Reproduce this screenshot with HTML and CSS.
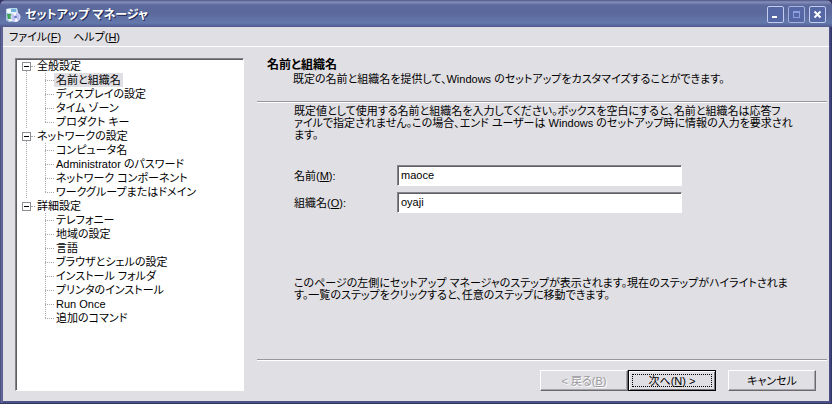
FILE: index.html
```html
<!DOCTYPE html>
<html lang="ja">
<head>
<meta charset="utf-8">
<title>セットアップ マネージャ</title>
<link rel="stylesheet" href="styles.css">
</head>
<body>
<div class="window">
  <header class="titlebar">
    <svg class="app-icon" viewBox="0 0 16 16" aria-hidden="true">
      <path d="M1 2 L5 1 L12 1 L13 4 V14 L4 15 L1 13 Z" fill="#b9d6ea"/>
      <path d="M2 2 H9 V6 H2 Z" fill="#f4fbff"/>
      <path d="M6 2 H11 V5 H6 Z" fill="#6fb4d8"/>
      <path d="M1 5 L4 7 V15 L1 13 Z" fill="#a9bfe2"/>
      <path d="M2 7 H7 V12 H3 Z" fill="#3fa355"/>
      <path d="M3 12 H7 V14 H4 Z" fill="#e9f3f4"/>
      <circle cx="10.500" cy="10" r="4.500" fill="#bfc2f0" stroke="#e4e7ff"/>
      <path d="M10.500 10 L8 6.500 L11 5.500 Z M10.500 10 L13 14 L10 14.500 Z" fill="#fff"/>
      <circle cx="10.500" cy="10" r="1.300" fill="#6f79c4"/>
    </svg>
    <h1 class="title">セットアップ マネージャ</h1>
    <div class="controls">
      <button class="control" type="button" aria-label="最小化"><svg viewBox="0 0 15 15"><path d="M4 9h5v2H4z" fill="#fff"/></svg></button>
      <button class="control" type="button" aria-label="最大化" disabled><svg viewBox="0 0 15 15"><path d="M4 4h7v7H4zM5 6v4h5V6z" fill="#8c9fe0" fill-rule="evenodd"/></svg></button>
      <button class="control" type="button" aria-label="閉じる"><svg viewBox="0 0 15 15"><path d="M4.500 4.500l6 6M10.500 4.500l-6 6" stroke="#fff" stroke-width="2"/></svg></button>
    </div>
  </header>
  <nav class="menubar">
    <button class="menu" type="button">ファイル(<u>F</u>)</button>
    <button class="menu" type="button">ヘルプ(<u>H</u>)</button>
  </nav>
  <main class="content">
    <nav class="tree">
      <ul>
        <li class="root"><span class="root-label"><span class="toggle"></span>全般設定</span>
          <ul class="branch">
            <li><a href="#" class="current">名前と組織名</a></li>
            <li><a href="#">ディスプレイの設定</a></li>
            <li><a href="#">タイム ゾーン</a></li>
            <li><a href="#">プロダクト キー</a></li>
          </ul>
        </li>
        <li class="root"><span class="root-label"><span class="toggle"></span>ネットワークの設定</span>
          <ul class="branch">
            <li><a href="#">コンピュータ名</a></li>
            <li><a href="#">Administrator のパスワード</a></li>
            <li><a href="#">ネットワーク コンポーネント</a></li>
            <li><a href="#">ワークグループまたはドメイン</a></li>
          </ul>
        </li>
        <li class="root"><span class="root-label"><span class="toggle"></span>詳細設定</span>
          <ul class="branch">
            <li><a href="#">テレフォニー</a></li>
            <li><a href="#">地域の設定</a></li>
            <li><a href="#">言語</a></li>
            <li><a href="#">ブラウザとシェルの設定</a></li>
            <li><a href="#">インストール フォルダ</a></li>
            <li><a href="#">プリンタのインストール</a></li>
            <li><a href="#">Run Once</a></li>
            <li><a href="#">追加のコマンド</a></li>
          </ul>
        </li>
      </ul>
    </nav>
    <form class="page">
      <div class="heading">
        <h2>名前と組織名</h2>
        <p>既定の名前と組織名を提供して、Windows のセットアップをカスタマイズすることができます。</p>
      </div>
      <div class="body">
        <p>既定値として使用する名前と組織名を入力してください。ボックスを空白にすると、名前と組織名は応答フ<br>ァイルで指定されません。この場合、エンド ユーザーは Windows のセットアップ時に情報の入力を要求され<br>ます。</p>
        <div class="fields">
          <label for="name">名前(<u>M</u>):</label>
          <input id="name" type="text" value="maoce">
          <label for="org">組織名(<u>O</u>):</label>
          <input id="org" type="text" value="oyaji">
        </div>
        <p>このページの左側にセットアップ マネージャのステップが表示されます。現在のステップがハイライトされま<br>す。一覧のステップをクリックすると、任意のステップに移動できます。</p>
      </div>
      <footer class="actions">
        <div class="pair">
          <button class="push" type="button" disabled>&lt; 戻る(<u>B</u>)</button>
          <button class="push default" type="button">次へ(<u>N</u>) &gt;</button>
        </div>
        <button class="push" type="button">キャンセル</button>
      </footer>
    </form>
  </main>
</div>
</body>
</html>
```

FILE: styles.css
```css
* { box-sizing: border-box; margin: 0; padding: 0; }

body {
  background: #33345f;
  color: #000;
  font: 11px/12px "Liberation Sans", "Noto Sans CJK JP", sans-serif;
  font-feature-settings: "palt";
}

button, input { font: inherit; font-feature-settings: inherit; color: inherit; }
ul { list-style: none; }
u { text-underline-offset: 1px; }

.window {
  display: flex;
  flex-direction: column;
  min-height: 100vh;
  padding: 0 3px 2px;
  background: linear-gradient(90deg, #45477c, #696f9f 2px, #4c5286 3px, #4c5286 calc(100% - 3px), #454a82 calc(100% - 2px), #2f3060);
  border-bottom: 1px solid #33345f;
  border-radius: 6px 6px 0 0;
  overflow: hidden;
}

.titlebar {
  display: flex;
  align-items: center;
  height: 27px;
  margin: 0 -3px;
  padding: 2px 6px 0 5px;
  gap: 4px;
  background: linear-gradient(#4b5286, #8790ba 2px, #5d6a9d 5px, #5a689b 12px, #6478ac 23px, #4f5a8f);
}
.app-icon { width: 16px; height: 16px; }
.title {
  flex: 1;
  color: #fff;
  font-size: 12px;
  line-height: 16px;
  font-weight: 700;
  text-shadow: 1px 1px #1d2550;
}
.controls { display: flex; gap: 4px; }
.control {
  width: 17px;
  height: 17px;
  border: 1px solid #c3cbee;
  border-radius: 2px;
  background: #5567a5;
}
.control svg { display: block; width: 15px; height: 15px; }
.control:disabled { border-color: #a5b0dd; }

.menubar {
  display: flex;
  gap: 12px;
  height: 20px;
  padding: 0 6px;
  background: #e0dfe3;
  border-bottom: 1px solid #fff;
}
.menu { border: 0; background: none; line-height: 18px; }

.content {
  flex: 1;
  display: flex;
  gap: 13px;
  padding: 11px 2px 10px 12px;
  background: #e0dfe3;
}

.tree {
  flex: 0 0 229px;
  padding: 0 5px;
  background: #fff;
  border: 1px solid;
  border-color: #85848a #fff #fff #85848a;
  box-shadow: inset 1px 1px #5f5e63;
  white-space: nowrap;
}
.root:not(:last-child) { background: repeating-linear-gradient(#a8a8a8 0 1px, transparent 1px 2px) 5px 8px / 1px 100% no-repeat; }
.root-label { display: flex; align-items: center; line-height: 14px; height: 14px; }
.toggle {
  width: 9px;
  height: 9px;
  margin: 0 6px 0 1px;
  border: 1px solid #8f8e94;
  background: linear-gradient(#000, #000) center / 5px 1px no-repeat #fff;
}
.toggle::after {
  content: "";
  display: block;
  width: 4px;
  margin: 3px 0 0 8px;
  border-top: 1px dotted #a8a8a8;
}
.branch { padding-left: 24px; }
.branch li {
  display: flex;
  align-items: center;
  height: 14px;
  background: repeating-linear-gradient(#a8a8a8 0 1px, transparent 1px 2px) 0 0 / 1px 100% no-repeat;
}
.branch li:last-child { background-size: 1px 7px; }
.branch li::before { content: ""; width: 9px; border-top: 1px dotted #a8a8a8; }
.branch a { padding: 0 2px; line-height: 14px; color: inherit; text-decoration: none; }
.branch .current { background: #e0dfe3; }

.page {
  flex: 1;
  min-width: 0;
  display: flex;
  flex-direction: column;
  white-space: nowrap;
}
.heading { height: 44px; padding: 0 10px; border-bottom: 1px solid #98979c; box-shadow: 0 1px #fff; }
.heading h2 { font-size: 12px; line-height: 14px; }
.heading p { padding-left: 26px; line-height: 14px; }
.body { flex: 1; padding: 3px 37px; }
.fields {
  display: grid;
  grid-template-columns: 93px minmax(0, 285px);
  align-items: center;
  gap: 6px 10px;
  margin: 24px 0 64px;
}
.fields input {
  width: 100%;
  height: 21px;
  padding: 0 3px 2px;
  border: 1px solid;
  border-color: #85848a #fff #fff #85848a;
  border-radius: 0;
  box-shadow: inset 1px 1px #5f5e63;
  background: #fff;
  outline: 0;
}
.actions {
  display: flex;
  justify-content: flex-end;
  gap: 12px;
  padding: 10px 11px 0 0;
  border-top: 1px solid #98979c;
  box-shadow: inset 0 1px #fff;
}
.pair { display: flex; }
.push {
  width: 88px;
  height: 21px;
  border: 1px solid;
  border-color: #fff #6a696e #6a696e #fff;
  box-shadow: inset -1px -1px #a5a4aa;
  background: #e0dfe3;
}
.push:disabled { color: #9b9aa0; text-shadow: 1px 1px #fff; }
.default {
  border-color: #000;
  box-shadow: inset 1px 1px #fff, inset -1px -1px #77767b;
  outline: 1px dotted #000;
  outline-offset: -5px;
}
```
